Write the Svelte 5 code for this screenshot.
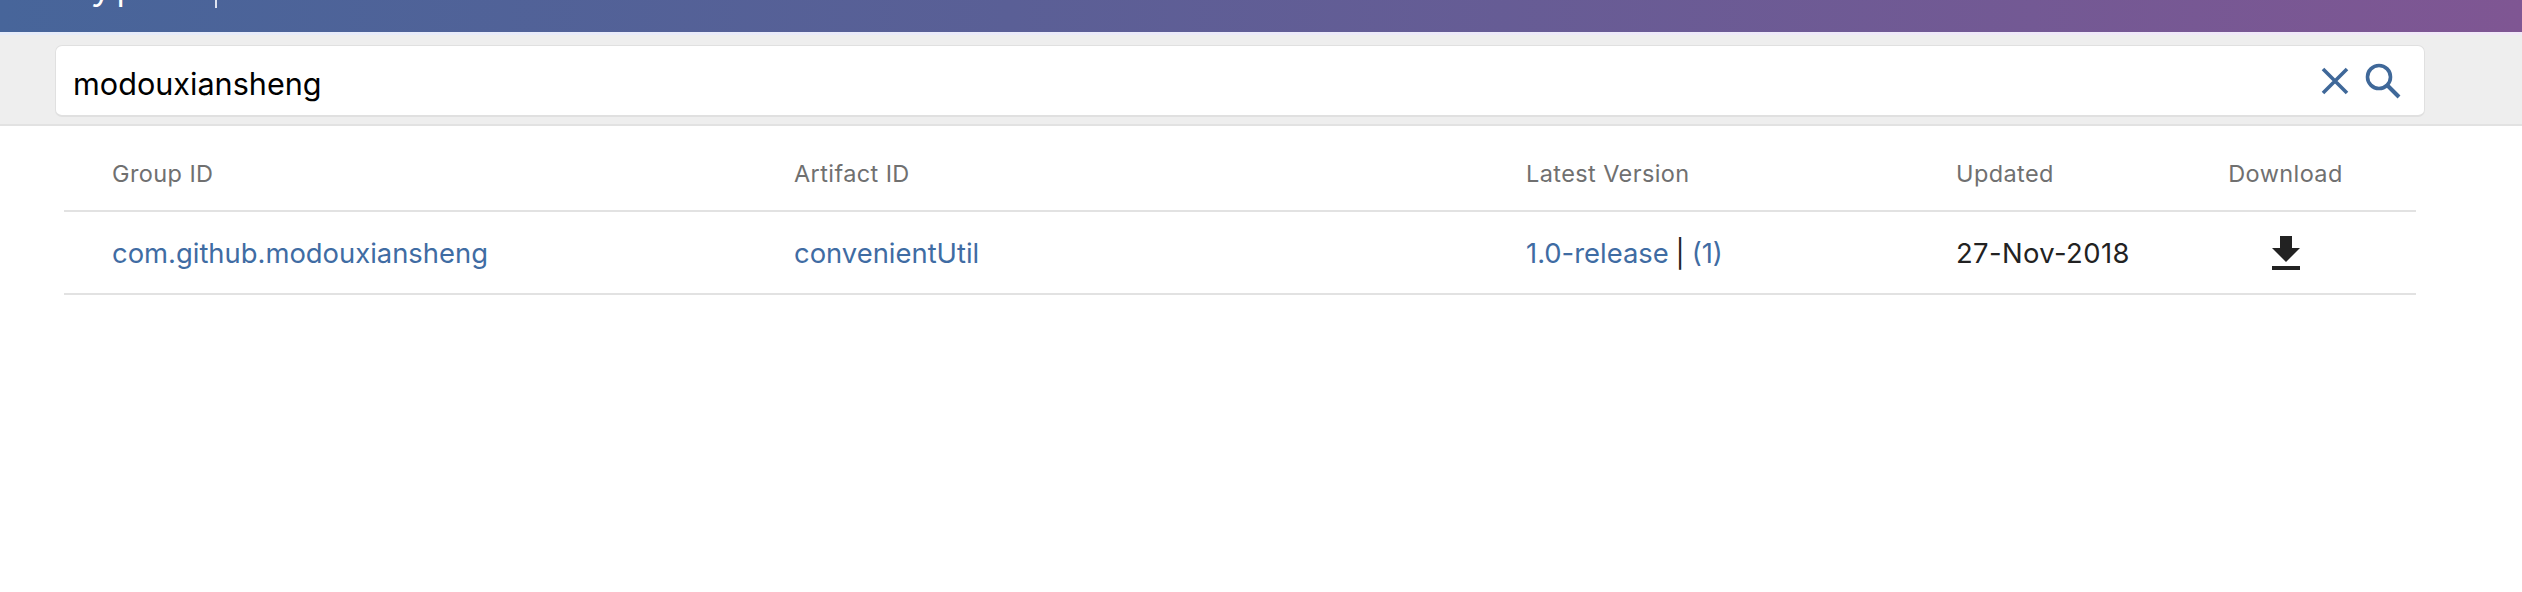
<script>
    const rows = [
        { group: "com.github.modouxiansheng", artifact: "convenientUtil", version: "1.0-release", count: 1, updated: "27-Nov-2018" }
    ]
</script>

<main>
    <header class="topbar">
        <span class="brand">yp</span>
        <span class="divider"></span>
    </header>

    <section class="search">
        <div class="field">
            <input type="text" value="modouxiansheng" />
            <button class="icon" aria-label="Clear">
                <svg width="30" height="30" viewBox="0 0 30 30"><path d="M3 3 L27 27 M27 3 L3 27" stroke="#3f6899" stroke-width="3.6" fill="none" /></svg>
            </button>
            <button class="icon" aria-label="Search">
                <svg width="36" height="36" viewBox="0 0 36 36"><circle cx="14" cy="14" r="11.5" stroke="#3f6899" stroke-width="3.6" fill="none" /><path d="M22.5 22.5 L34 34" stroke="#3f6899" stroke-width="4" fill="none" /></svg>
            </button>
        </div>
    </section>

    <div class="table">
        <div class="row head">
            <div>Group ID</div>
            <div>Artifact ID</div>
            <div>Latest Version</div>
            <div>Updated</div>
            <div class="dl">Download</div>
        </div>
        {#each rows as row}
            <div class="row">
                <div><a href="#g">{row.group}</a></div>
                <div><a href="#a">{row.artifact}</a></div>
                <div class="version"><a href="#v">{row.version}</a> | <a href="#c">({row.count})</a></div>
                <div class="date">{row.updated}</div>
                <div class="dl">
                    <svg width="28" height="34" viewBox="0 0 28 34"><path d="M8 0 H20 V12 H28 L14 26 L0 12 H8 Z M0 30 H28 V34 H0 Z" fill="#222" /></svg>
                </div>
            </div>
        {/each}
    </div>
</main>

<style>
    :global(body) {
        background: #fff;
        font-family: Inter, "Liberation Sans", sans-serif;
    }
    main {
        height: 592px;
        overflow: hidden;
    }
    .topbar {
        height: 32px;
        overflow: hidden;
        display: flex;
        align-items: flex-start;
        padding-left: 90px;
        background: linear-gradient(90deg, #47659a 0%, #5a5f96 40%, #7f5693 100%);
    }
    /* only the descenders of the logo text peek in below the scroll edge */
    .brand {
        color: #fff;
        font-size: 44px;
        font-weight: 300;
        line-height: 44px;
        letter-spacing: 1px;
        margin-top: -40px;
        width: 125px;
    }
    .divider {
        width: 2px;
        height: 8px;
        background: #dfe3f0;
    }
    .search {
        height: 94px;
        box-sizing: border-box;
        padding: 13px 97px 0 55px;
        background: #eeeeee;
        border-bottom: 2px solid #e2e2e2;
        background-image: linear-gradient(90deg, #e6ecfa, #f1e8f8);
        background-size: 100% 3px;
        background-repeat: no-repeat;
    }
    .field {
        height: 72px;
        box-sizing: border-box;
        display: flex;
        align-items: center;
        gap: 15px;
        padding: 0 23px 0 17px;
        background: #fff;
        border: 1px solid #e0e0e0;
        border-bottom-width: 2px;
        border-radius: 7px;
    }
    input {
        flex: 1;
        border: 0;
        outline: 0;
        padding: 5px 0 0;
        font: inherit;
        font-size: 30.6px;
        color: #000;
    }
    .icon {
        border: 0;
        padding: 0;
        background: none;
        display: flex;
    }
    .table {
        margin: 0 106px 0 64px;
        font-size: 27.4px;
        color: #222;
    }
    .row {
        display: grid;
        grid-template-columns: 682px 732px 430px 273px 1fr;
        align-items: center;
        box-sizing: border-box;
        height: 83px;
        border-bottom: 2px solid #e2e2e2;
    }
    .row > div {
        padding-left: 48px;
    }
    .row > .dl {
        padding-left: 0;
        display: flex;
        justify-content: center;
        padding-right: 26px;
    }
    .head {
        height: 86px;
        padding-top: 10px;
        color: #707070;
        font-size: 23.5px;
        letter-spacing: 0.4px;
    }
    .version {
        word-spacing: -0.8px;
    }
    .date {
        letter-spacing: 0.4px;
    }
    a {
        color: #3f6ca3;
        text-decoration: none;
    }
</style>
